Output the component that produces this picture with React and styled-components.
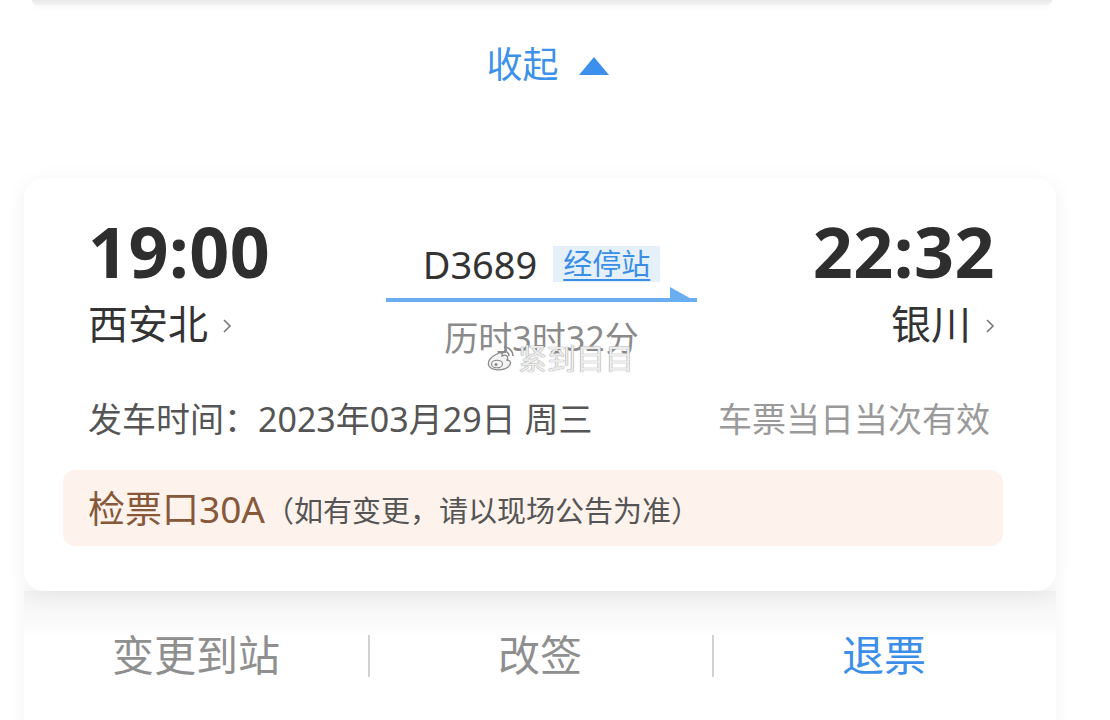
import styled, { createGlobalStyle } from "styled-components"

const GlobalStyle = createGlobalStyle`
  html, body {
    margin: 0;
    padding: 0;
    background: #fff;
  }
  body {
    font-family: "Noto Sans", "Noto Sans CJK SC", sans-serif;
    color: #333;
  }
`

const Page = styled.div`
  width: 1110px;
  height: 720px;
  overflow: hidden;
  background: #fff;
`

const PrevCardEdge = styled.div`
  height: 5px;
  margin: 0 58px 0 32px;
  background: linear-gradient(180deg, #e9e9e9, #f3f3f3);
  border-radius: 0 0 6px 6px;
  box-shadow: 0 2px 6px rgba(0, 0, 0, 0.04);
`

const CollapseRow = styled.div`
  display: flex;
  justify-content: center;
  align-items: center;
  gap: 20px;
  padding: 42px 15px 0 0;
  margin-bottom: 95px;
  height: 36px;
  font-size: 36px;
  line-height: 1;
  color: #3e91ea;
`

const UpTriangle = styled.span`
  width: 0;
  height: 0;
  border-left: 15px solid transparent;
  border-right: 15px solid transparent;
  border-bottom: 18px solid #3d8fee;
  margin-top: 2px;
`

const Card = styled.div`
  position: relative;
  z-index: 1;
  margin: 0 54px 0 24px;
  padding: 38px 61px 45px 64px;
  background: #fff;
  border-radius: 20px;
  box-shadow: 0 4px 22px rgba(0, 0, 0, 0.06);
`

const TripRow = styled.div`
  display: grid;
  grid-template-columns: 1fr 311px 1fr;
  align-items: start;
`

const Endpoint = styled.div`
  display: flex;
  flex-direction: column;
  align-items: ${(p) => (p.$end ? "flex-end" : "flex-start")};
`

const Time = styled.div`
  font-size: 70px;
  font-weight: 700;
  line-height: 1;
  color: #2e2e2e;
  letter-spacing: 0.5px;
`

const Station = styled.div`
  display: flex;
  align-items: center;
  gap: 14px;
  margin-top: 18px;
  font-size: 40px;
  line-height: 1;
  color: #333;
`

const Chevron = styled.svg`
  width: 10px;
  height: 16px;
  margin-top: 4px;
`

const Middle = styled.div`
  position: relative;
  display: flex;
  flex-direction: column;
  align-items: center;
  padding-top: 29px;
`

const TrainRow = styled.div`
  display: flex;
  align-items: center;
  gap: 16px;
`

const TrainNo = styled.div`
  font-size: 38px;
  line-height: 1;
  color: #333;
`

const StopsBadge = styled.span`
  display: inline-block;
  padding: 3px 10px 4px;
  background: #e6f0fb;
  font-size: 29px;
  line-height: 1;
  color: #3a8ee6;
  text-decoration: underline;
  text-underline-offset: 4px;
  text-decoration-thickness: 2px;
`

const ArrowLine = styled.svg`
  display: block;
  width: 311px;
  height: 18px;
  margin-top: 3px;
`

const Duration = styled.div`
  margin-top: 17px;
  font-size: 34px;
  line-height: 1;
  color: #8a8a8a;
`

const Watermark = styled.div`
  position: absolute;
  left: 100px;
  top: 127px;
  display: flex;
  align-items: center;
  gap: 2px;
  font-size: 29px;
  line-height: 1;
  color: #ececec;
  text-shadow: 0 0 1px #9a9a9a, 0 0 1px #9a9a9a;
  white-space: nowrap;
`

const InfoRow = styled.div`
  display: flex;
  justify-content: space-between;
  align-items: center;
  margin-top: 47px;
  padding-right: 5px;
  font-size: 34px;
  line-height: 1;
`

const DepartInfo = styled.span`
  color: #555;
`

const Validity = styled.span`
  color: #9a9a9a;
`

const GateBox = styled.div`
  display: flex;
  align-items: center;
  margin: 34px -8px 0 -25px;
  padding: 0 25px;
  height: 76px;
  background: #fdf3ec;
  border-radius: 12px;
`

const GateNo = styled.span`
  font-size: 37px;
  line-height: 1;
  color: #87583a;
`

const GateNote = styled.span`
  font-size: 29px;
  line-height: 1;
  color: #555;
  margin-top: 4px;
`

const ActionBar = styled.div`
  display: flex;
  margin: 0 54px 0 24px;
  padding-top: 43px;
  height: 140px;
  background: linear-gradient(180deg, #f3f3f3 0, #fafafa 30px, #fff 50px);
  box-shadow: 0 0 18px rgba(0, 0, 0, 0.05);
`

const Action = styled.div`
  flex: 1;
  display: flex;
  justify-content: center;
  align-items: flex-start;
  position: relative;
  font-size: 42px;
  line-height: 1;
  color: ${(p) => (p.$primary ? "#3c8ee8" : "#8f8f8f")};

  &:not(:first-child)::before {
    content: "";
    position: absolute;
    left: 0;
    top: 1px;
    width: 2px;
    height: 42px;
    background: #d2d2d2;
  }
`

const ChevronIcon = () => (
  <Chevron viewBox="0 0 10 16">
    <path d="M2 2 L8 8 L2 14" fill="none" stroke="#777" strokeWidth="1.6" />
  </Chevron>
)

const WeiboMark = () => (
  <svg width="30" height="30" viewBox="0 0 30 30">
    <path
      d="M11 11 C4 14 1 19 3 23 C6 28 17 28 22 24 C26 21 25 17 21 17 C23 13 20 11 16 13 C17 9 14 9 11 11 Z"
      fill="#f4f4f4"
      stroke="#888"
      strokeWidth="1.3"
    />
    <ellipse cx="11" cy="21" rx="5.5" ry="3.8" fill="none" stroke="#888" strokeWidth="1.1" />
    <circle cx="10" cy="21.5" r="1.5" fill="#888" />
    <path d="M18 4 A9 9 0 0 1 27 13" fill="none" stroke="#888" strokeWidth="1.6" />
    <path d="M18 8 A5 5 0 0 1 23 13" fill="none" stroke="#888" strokeWidth="1.6" />
  </svg>
)

export default function App() {
  return (
    <Page>
      <GlobalStyle />
      <PrevCardEdge />
      <CollapseRow>
        收起
        <UpTriangle />
      </CollapseRow>

      <Card>
        <TripRow>
          <Endpoint>
            <Time>19:00</Time>
            <Station>
              西安北
              <ChevronIcon />
            </Station>
          </Endpoint>

          <Middle>
            <TrainRow>
              <TrainNo>D3689</TrainNo>
              <StopsBadge>经停站</StopsBadge>
            </TrainRow>
            <ArrowLine viewBox="0 0 311 18">
              <rect x="0" y="12" width="311" height="4" fill="#6aaef2" />
              <polygon points="284,1 311,16 284,16" fill="#6aaef2" />
            </ArrowLine>
            <Duration>历时3时32分</Duration>
            <Watermark>
              <WeiboMark />
              紧到目目
            </Watermark>
          </Middle>

          <Endpoint $end>
            <Time>22:32</Time>
            <Station>
              银川
              <ChevronIcon />
            </Station>
          </Endpoint>
        </TripRow>

        <InfoRow>
          <DepartInfo>发车时间：2023年03月29日 周三</DepartInfo>
          <Validity>车票当日当次有效</Validity>
        </InfoRow>

        <GateBox>
          <GateNo>检票口30A</GateNo>
          <GateNote>（如有变更，请以现场公告为准）</GateNote>
        </GateBox>
      </Card>

      <ActionBar>
        <Action>变更到站</Action>
        <Action>改签</Action>
        <Action $primary>退票</Action>
      </ActionBar>
    </Page>
  )
}
